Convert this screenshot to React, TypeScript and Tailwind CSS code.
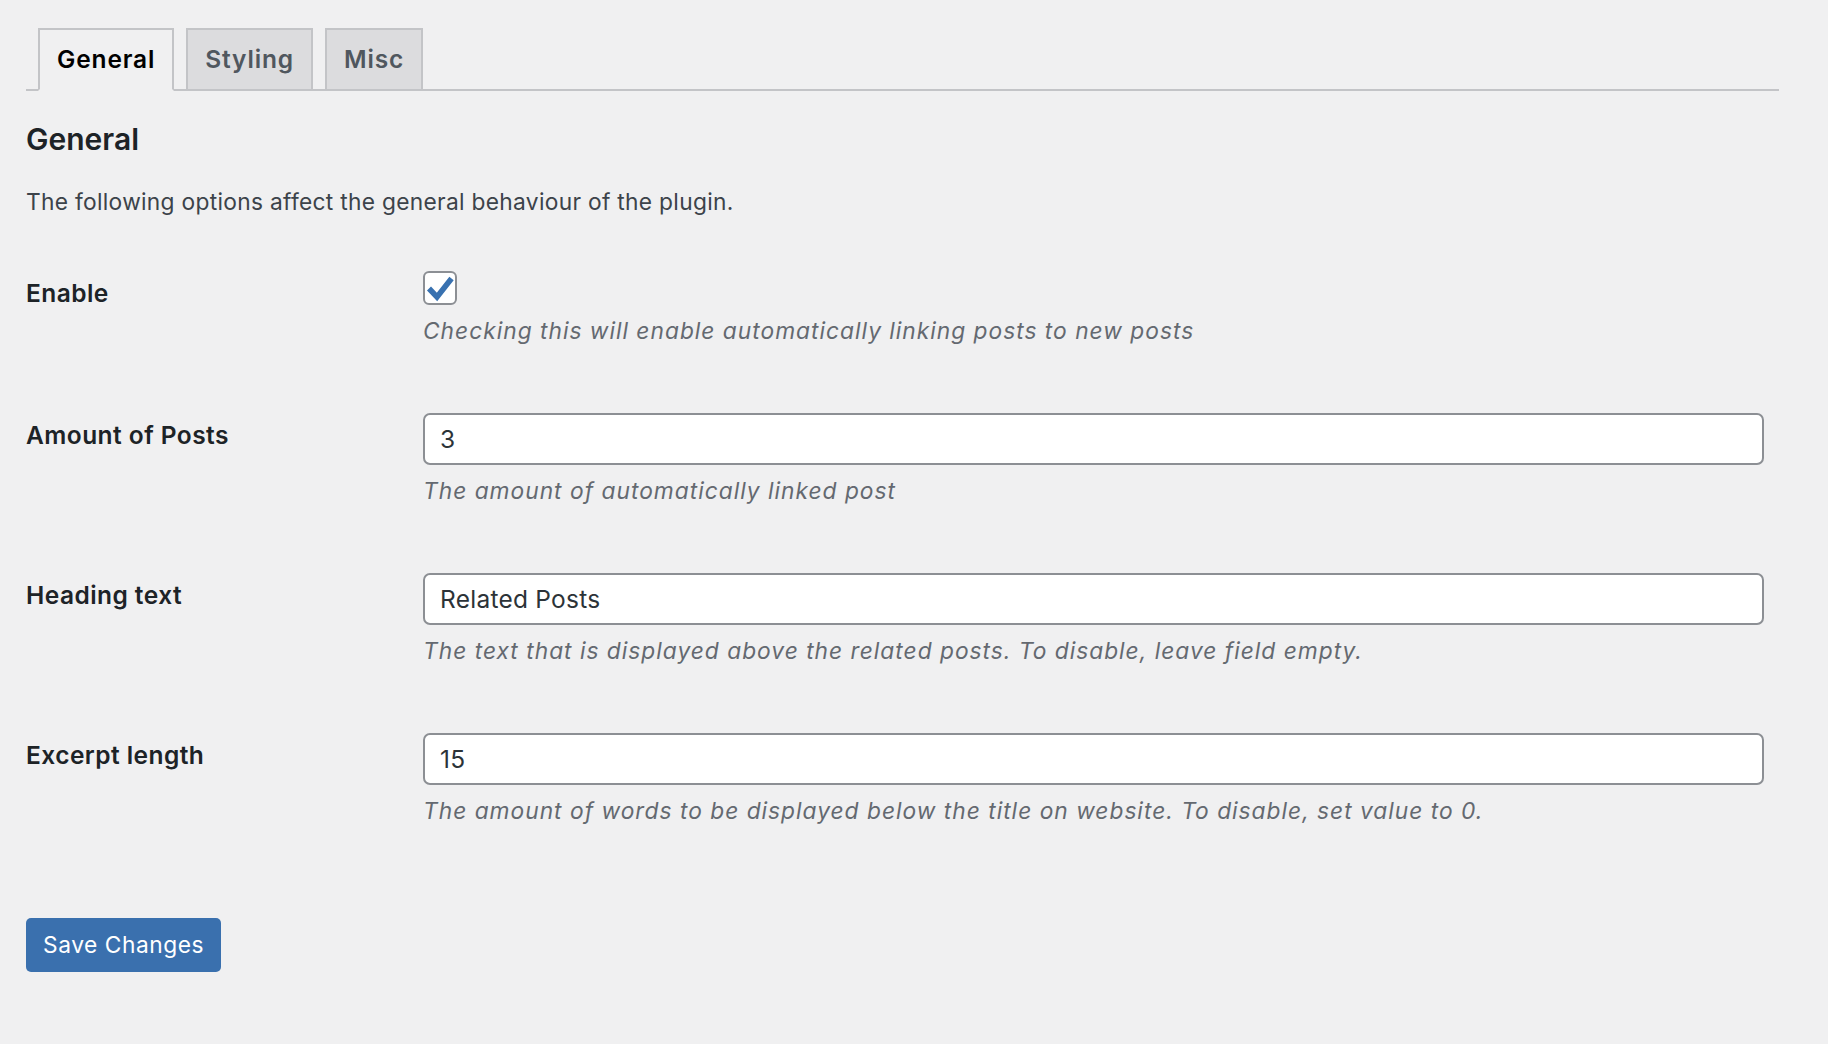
import { useState } from "react"

const tabs = ["General", "Styling", "Misc"]

interface Field {
  label: string
  value: string
  description: string
}

const fields: Field[] = [
  {
    label: "Amount of Posts",
    value: "3",
    description: "The amount of automatically linked post",
  },
  {
    label: "Heading text",
    value: "Related Posts",
    description:
      "The text that is displayed above the related posts. To disable, leave field empty.",
  },
  {
    label: "Excerpt length",
    value: "15",
    description:
      "The amount of words to be displayed below the title on website. To disable, set value to 0.",
  },
]

const Row: React.FC<{ label: string; children: React.ReactNode }> = ({
  label,
  children,
}) => (
  <div className="flex">
    <div className="w-[397px] shrink-0 pt-[6px] text-[24.5px] leading-[32px] font-semibold tracking-[0.45px] text-[#1d2327]">
      {label}
    </div>
    <div className="flex-1 pr-[15px]">{children}</div>
  </div>
)

export default function App() {
  const [active, setActive] = useState("General")
  const [enabled, setEnabled] = useState(true)
  const [values, setValues] = useState(fields.map((f) => f.value))

  return (
    <div
      className="min-h-screen bg-[#f0f0f1] pl-[26px] pr-[49px] pt-[28px]"
      style={{ fontFamily: "Inter, 'Noto Sans', sans-serif" }}
    >
      {/* tabs */}
      <div className="flex border-b-2 border-[#c3c4c7] pl-[12px] gap-[12px]">
        {tabs.map((t) => (
          <button
            key={t}
            onClick={() => setActive(t)}
            className={
              t === active
                ? "-mb-[2px] border-2 border-[#c3c4c7] border-b-[#f0f0f1] bg-[#f0f0f1] px-[17px] py-[8px] text-[24.5px] leading-[43px] font-semibold tracking-[0.85px] text-black"
                : "-mb-[2px] border-2 border-[#c3c4c7] bg-[#dcdcde] px-[17px] py-[8px] text-[24.5px] leading-[43px] font-semibold tracking-[0.85px] text-[#50575e]"
            }
          >
            {t}
          </button>
        ))}
      </div>

      <h2 className="mt-[29px] text-[30px] leading-[39px] font-semibold text-[#1d2327]">
        General
      </h2>
      <p className="mt-[26px] text-[22.75px] leading-[34px] tracking-[0.3px] text-[#3c434a]">
        The following options affect the general behaviour of the plugin.
      </p>

      <div className="mt-[52px] flex flex-col gap-[65px]">
        <Row label="Enable">
          <button
            onClick={() => setEnabled(!enabled)}
            className="flex h-[34px] w-[34px] items-center justify-center rounded-[6px] border-2 border-[#8c8f94] bg-white"
          >
            {enabled && (
              <svg width="30" height="30" viewBox="0 0 30 30">
                <path
                  d="M4 15.5 L12 24 L26.5 5.5"
                  fill="none"
                  stroke="#3871b0"
                  strokeWidth="5.5"
                />
              </svg>
            )}
          </button>
          <p className="mt-[9px] text-[22.75px] leading-[34px] italic tracking-[1px] text-[#646970]">
            Checking this will enable automatically linking posts to new posts
          </p>
        </Row>

        {fields.map((f, i) => (
          <Row key={f.label} label={f.label}>
            <input
              type="text"
              value={values[i]}
              onChange={(e) =>
                setValues(values.map((v, j) => (j === i ? e.target.value : v)))
              }
              className="block h-[52px] w-full rounded-[7px] border-2 border-[#8c8f94] bg-white px-[15px] text-[24.5px] tracking-[0.25px] text-[#2c3338] outline-none"
            />
            <p className="mt-[9px] text-[22.75px] leading-[34px] italic tracking-[1px] text-[#646970]">
              {f.description}
            </p>
          </Row>
        ))}
      </div>

      <button className="mt-[90px] h-[54px] rounded-[5px] bg-[#3a70ae] px-[17px] text-[22.75px] tracking-[0.55px] text-white">
        Save Changes
      </button>
    </div>
  )
}
